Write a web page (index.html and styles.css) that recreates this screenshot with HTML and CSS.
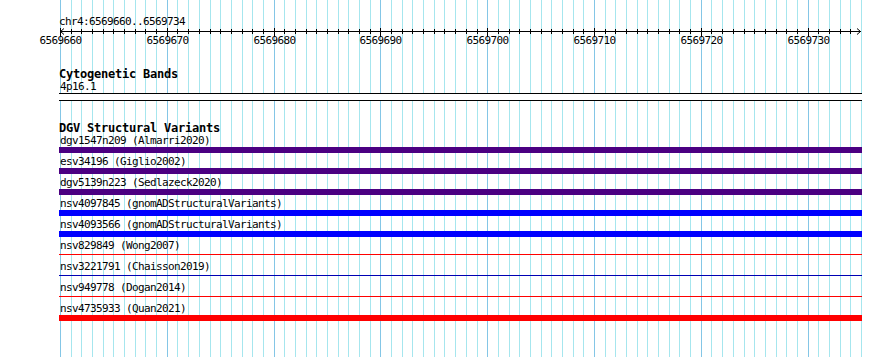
FILE: index.html
```html
<!DOCTYPE html>
<html lang="en">

<head>
    <meta charset="UTF-8">
    <title>chr4:6569660..6569734</title>
    <link rel="stylesheet" href="styles.css">
</head>

<body>

    <div class="browser">
        <!-- grid lines, drawn below everything else -->
        <svg id="grid" class="grid" width="890" height="357"></svg>

        <div class="position">chr4:6569660..6569734</div>

        <svg id="ruler" class="ruler" width="890" height="22">
            <line class="axis" x1="60" y1="3.5" x2="861" y2="3.5"></line>
            <polyline class="arrow" points="64,0.5 60.5,3.5 64,6.5"></polyline>
            <polyline class="arrow" points="857,0.5 860.5,3.5 857,6.5"></polyline>
        </svg>

        <section class="track cyto">
            <h3 class="track-title">Cytogenetic Bands</h3>
            <div class="feature-label">4p16.1</div>
            <div class="band"></div>
        </section>

        <section class="track dgv">
            <h3 class="track-title">DGV Structural Variants</h3>

            <div class="sv">
                <div class="feature-label">dgv1547n209 (Almarri2020)</div>
                <div class="bar indigo"></div>
            </div>
            <div class="sv">
                <div class="feature-label">esv34196 (Giglio2002)</div>
                <div class="bar indigo"></div>
            </div>
            <div class="sv">
                <div class="feature-label">dgv5139n223 (Sedlazeck2020)</div>
                <div class="bar indigo"></div>
            </div>
            <div class="sv">
                <div class="feature-label">nsv4097845 (gnomADStructuralVariants)</div>
                <div class="bar blue"></div>
            </div>
            <div class="sv">
                <div class="feature-label">nsv4093566 (gnomADStructuralVariants)</div>
                <div class="bar blue"></div>
            </div>
            <div class="sv">
                <div class="feature-label">nsv829849 (Wong2007)</div>
                <div class="bar thin"><div class="line red"></div></div>
            </div>
            <div class="sv">
                <div class="feature-label">nsv3221791 (Chaisson2019)</div>
                <div class="bar thin"><div class="line navy"></div></div>
            </div>
            <div class="sv">
                <div class="feature-label">nsv949778 (Dogan2014)</div>
                <div class="bar thin"><div class="line red"></div></div>
            </div>
            <div class="sv">
                <div class="feature-label">nsv4735933 (Quan2021)</div>
                <div class="bar red"></div>
            </div>
        </section>
    </div>

    <script>
        var svgNS = "http://www.w3.org/2000/svg";
        var grid = document.getElementById("grid");
        var ruler = document.getElementById("ruler");

        var start = 6569660;
        var left = 60;
        var span = 75;
        var scale = 801 / span;

        function add(parent, tag, attrs) {
            var el = document.createElementNS(svgNS, tag);
            for (var key in attrs) {
                el.setAttribute(key, attrs[key]);
            }
            parent.appendChild(el);
            return el;
        }

        for (var i = 0; i <= span; i++) {
            var x = Math.round(left + i * scale) + 0.5;
            var major = i % 10 == 0;

            add(grid, "line", {
                x1: x, y1: 0, x2: x, y2: 357,
                "class": major ? "major" : "minor"
            });

            if (i == span) continue;

            // ruler ticks, longer every 10 bp
            add(ruler, "line", {
                x1: x, y1: major ? 0 : 1, x2: x, y2: major ? 9 : 6,
                "class": "tick"
            });

            if (major) {
                var label = add(ruler, "text", { x: x, y: 16, "class": "tick-label" });
                label.textContent = start + i;
            }
        }
    </script>

</body>

</html>
```

FILE: styles.css
```css
body {
    margin: 0;
    background-color: #fff;
}

.browser {
    position: relative;
    z-index: 0;
    width: 890px;
    height: 357px;
    padding-top: 15px;
    box-sizing: border-box;
    overflow: hidden;
    font-family: "DejaVu Sans Mono", monospace;
    font-size: 11px;
    letter-spacing: -0.62px;
    line-height: 13px;
    color: #000;
}

.grid {
    position: absolute;
    top: 0;
    left: 0;
    z-index: -1;
}

.grid line {
    stroke-width: 1;
    shape-rendering: crispEdges;
}

.grid .minor {
    stroke: #a6e6ee;
}

.grid .major {
    stroke: #84c6e6;
}

.position {
    margin-left: 59px;
    white-space: pre;
}

.ruler {
    display: block;
}

.ruler .axis,
.ruler .tick {
    stroke: #000;
    stroke-width: 1;
    shape-rendering: crispEdges;
}

.ruler .arrow {
    fill: none;
    stroke: #000;
    stroke-width: 1;
}

.tick-label {
    font-family: "DejaVu Sans Mono", monospace;
    font-size: 11px;
    letter-spacing: -0.62px;
    text-anchor: middle;
    fill: #000;
}

.track {
    margin-left: 59px;
    width: 803px;
}

.track-title {
    margin: 0;
    font-size: 12px;
    letter-spacing: -0.22px;
    font-weight: bold;
    line-height: 11px;
}

.cyto {
    margin-top: 19px;
}

.dgv {
    margin-top: 22px;
}

.feature-label {
    padding-left: 1px;
    white-space: pre;
}

.band {
    height: 6px;
    border-top: 1px solid #000;
    border-bottom: 1px solid #000;
    background-color: #fff;
}

.sv {
    margin-bottom: 2px;
}

.bar {
    height: 6px;
}

.bar.thin {
    box-sizing: border-box;
    padding-top: 2px;
}

.line {
    height: 1px;
}

.indigo {
    background-color: #4b0082;
}

.blue {
    background-color: #0000ff;
}

.red {
    background-color: #ff0000;
}

.navy {
    background-color: #0000b4;
}
```
